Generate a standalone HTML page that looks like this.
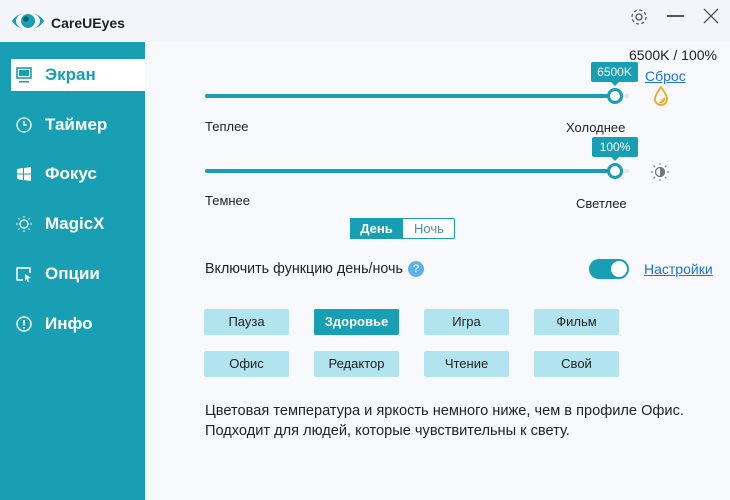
<!DOCTYPE html><html><head><meta charset="utf-8"><style>
*{margin:0;padding:0;box-sizing:border-box}
body{width:730px;height:500px;overflow:hidden;background:#f7f9fd;font-family:"Liberation Sans",sans-serif;position:relative;color:#222}
.a{position:absolute}
.top{left:0;top:0;width:730px;height:42px;background:#f4f5fb}
.side{left:0;top:42px;width:145px;height:458px;background:#189fb3}
.nav{left:0;width:145px;height:32px;color:#fff;font-weight:bold;font-size:17px;line-height:32px;padding-left:45px}
.nav.act{left:11px;width:134px;background:#fff;color:#189fb3;padding-left:34px}
.ic{position:absolute;left:16px;top:8px;width:16px;height:16px}
.t{font-size:13px;white-space:nowrap}
.track{height:4px;background:#189fb3;border-radius:2px;left:205px;width:410px}
.knob{width:16px;height:16px;border-radius:50%;background:#fff;border:3px solid #189fb3}
.bub{background:#189fb3;color:#fff;font-size:12px;text-align:center;line-height:20px;border-radius:2px}
.bub:after{content:"";position:absolute;left:50%;margin-left:-4px;bottom:-4px;border:4px solid transparent;border-bottom:0;border-top-color:#189fb3}
.btn{width:85px;height:26px;background:#b1e4ef;border-radius:2px;font-size:13px;text-align:center;line-height:26px}
</style></head><body>
<div class="a top"></div>
<svg class="a" style="left:11px;top:8px" width="34" height="26" viewBox="0 0 34 26"><path d="M1 13C7 2 27 2 33 13C27 24 7 24 1 13Z" fill="#189fb3"/><ellipse cx="17" cy="13" rx="12" ry="8.5" fill="#fff"/><circle cx="17" cy="13" r="7" fill="#189fb3"/><circle cx="15" cy="11" r="2.7" fill="#0d5d6a"/></svg>
<div class="a t" style="left:51px;top:15px;font-weight:bold;font-size:14px">CareUEyes</div>
<svg class="a" style="left:629px;top:7px" width="20" height="20" viewBox="0 0 20 20"><circle cx="10" cy="10" r="3" fill="none" stroke="#555" stroke-width="1.3"/><circle cx="10" cy="10" r="7" fill="none" stroke="#555" stroke-width="1.3" stroke-dasharray="3 2.5"/></svg>
<div class="a" style="left:667px;top:15px;width:17px;height:1.5px;background:#555"></div>
<svg class="a" style="left:703px;top:8px" width="16" height="16"><path d="M1 1L15 15M15 1L1 15" stroke="#555" stroke-width="1.3"/></svg>
<div class="a side"></div>
<div class="a nav act" style="top:59px"><svg class="ic" style="left:5px" viewBox="0 0 16 16"><rect x="1" y="1" width="14" height="10" fill="none" stroke="#189fb3" stroke-width="1.6"/><rect x="3" y="3" width="10" height="6" fill="#189fb3"/><rect x="3" y="14" width="10" height="1.5" fill="#189fb3"/></svg>Экран</div>
<div class="a nav" style="top:109px"><svg class="ic" viewBox="0 0 16 16"><circle cx="8" cy="8" r="7" fill="none" stroke="#fff" stroke-width="1.3"/><path d="M8 4V8H11" fill="none" stroke="#fff" stroke-width="1.3"/></svg>Таймер</div>
<div class="a nav" style="top:158px"><svg class="ic" viewBox="0 0 16 16"><path d="M1 3L7 2V7.5H1ZM8 2L15 1V7.5H8ZM1 8.5H7V14L1 13ZM8 8.5H15V15L8 14Z" fill="#fff"/></svg>Фокус</div>
<div class="a nav" style="top:208px"><svg class="ic" viewBox="0 0 16 16"><circle cx="8" cy="8" r="4" fill="none" stroke="#fff" stroke-width="1.3"/><path d="M8 0V2M8 14V16M0 8H2M14 8H16M2 2L3.5 3.5M12.5 12.5L14 14M2 14L3.5 12.5M12.5 3.5L14 2" stroke="#fff"/></svg>MagicX</div>
<div class="a nav" style="top:258px"><svg class="ic" viewBox="0 0 16 16"><path d="M7 14H1V2H14V7" fill="none" stroke="#fff" stroke-width="1.5"/><path d="M9 8L15 12L12 12.5L13 15.5L11.5 16L10.5 13L9 15Z" fill="#fff"/></svg>Опции</div>
<div class="a nav" style="top:308px"><svg class="ic" viewBox="0 0 16 16"><circle cx="8" cy="8" r="7" fill="none" stroke="#fff" stroke-width="1.4"/><rect x="7.2" y="4" width="1.6" height="5.5" fill="#fff"/><rect x="7.2" y="11" width="1.6" height="1.6" fill="#fff"/></svg>Инфо</div>
<div class="a t" style="left:629px;top:47px;font-size:14px">6500K / 100%</div>
<div class="a t" style="left:645px;top:68px;color:#1a73d9;text-decoration:underline;font-size:14px">Сброс</div>
<svg class="a" style="left:653px;top:86px" width="16" height="20" viewBox="0 0 16 20"><path d="M8 1C4 7 2 10 2 13A6 6 0 0 0 14 13C14 10 12 7 8 1Z" fill="none" stroke="#f5a623" stroke-width="1.8"/><path d="M12 13A4 4 0 0 1 6 16.5L12 11Z" fill="#f5a623"/></svg>
<div class="a" style="left:615px;top:94px;width:14px;height:4px;background:#e4e8ee;border-radius:2px"></div>
<div class="a track" style="top:94px"></div>
<div class="a knob" style="left:607px;top:88px"></div>
<div class="a bub" style="left:591px;top:62px;width:47px">6500K</div>
<div class="a t" style="left:205px;top:119px">Теплее</div>
<div class="a t" style="left:566px;top:120px">Холоднее</div>
<div class="a" style="left:615px;top:169px;width:14px;height:4px;background:#e4e8ee;border-radius:2px"></div>
<div class="a track" style="top:169px"></div>
<div class="a knob" style="left:607px;top:163px"></div>
<div class="a bub" style="left:592px;top:137px;width:46px">100%</div>
<svg class="a" style="left:651px;top:163px" width="18" height="18" viewBox="0 0 18 18"><circle cx="9" cy="9" r="4.5" fill="none" stroke="#777" stroke-width="1.3"/><path d="M9 4.5A4.5 4.5 0 0 1 9 13.5Z" fill="#777"/><path d="M9 0V2M9 16V18M0 9H2M16 9H18M2.5 2.5L4 4M14 14L15.5 15.5M2.5 15.5L4 14M14 4L15.5 2.5" stroke="#777"/></svg>
<div class="a t" style="left:205px;top:193px">Темнее</div>
<div class="a t" style="left:576px;top:196px">Светлее</div>
<div class="a" style="left:350px;top:218px;width:105px;height:21px;border:1px solid #189fb3;border-radius:2px;background:#fff"></div>
<div class="a t" style="left:350px;top:218px;width:53px;height:21px;background:#189fb3;color:#fff;font-weight:bold;text-align:center;line-height:21px">День</div>
<div class="a t" style="left:403px;top:218px;width:52px;line-height:21px;text-align:center;color:#4a8f99">Ночь</div>
<div class="a t" style="left:205px;top:261px;font-size:14.3px">Включить функцию день/ночь</div>
<div class="a" style="left:408px;top:261px;width:16px;height:16px;border-radius:50%;background:#5fb2e6;color:#fff;font-size:11px;text-align:center;line-height:16px">?</div>
<div class="a" style="left:589px;top:259px;width:40px;height:20px;border-radius:10px;background:#189fb3"></div>
<div class="a" style="left:611px;top:261px;width:16px;height:16px;border-radius:50%;background:#fff"></div>
<div class="a t" style="left:644px;top:261px;color:#1a73d9;text-decoration:underline;font-size:14px">Настройки</div>
<div class="a btn" style="left:204px;top:309px">Пауза</div>
<div class="a btn" style="left:314px;top:309px;background:#189fb3;color:#fff;font-weight:bold">Здоровье</div>
<div class="a btn" style="left:424px;top:309px">Игра</div>
<div class="a btn" style="left:534px;top:309px">Фильм</div>
<div class="a btn" style="left:204px;top:351px">Офис</div>
<div class="a btn" style="left:314px;top:351px">Редактор</div>
<div class="a btn" style="left:424px;top:351px">Чтение</div>
<div class="a btn" style="left:534px;top:351px">Свой</div>
<div class="a t" style="left:205px;top:401px;line-height:20px;font-size:14.6px">Цветовая температура и яркость немного ниже, чем в профиле Офис.<br>Подходит для людей, которые чувствительны к свету.</div>
</body></html>
